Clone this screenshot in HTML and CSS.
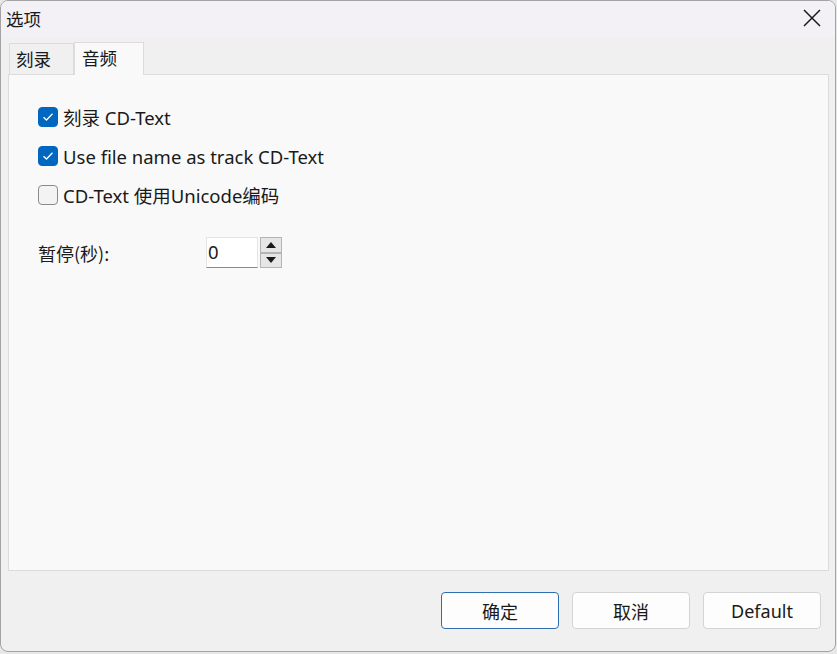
FILE: index.html
```html
<!DOCTYPE html>
<html lang="zh">
<head>
<meta charset="utf-8">
<title>选项</title>
<link rel="stylesheet" href="styles.css">
</head>
<body>
<div class="window">
  <div class="titlebar">
    <span class="title">选项</span>
    <span class="close">
      <svg width="18" height="18" viewBox="0 0 18 18"><path d="M1 1 L17 17 M17 1 L1 17" stroke="#1a1a1a" stroke-width="1.5" fill="none"/></svg>
    </span>
  </div>
  <div class="main">
    <div class="tabs">
      <div class="tab">刻录</div>
      <div class="tab active">音频</div>
    </div>
    <div class="panel">
      <label class="check-row">
        <span class="box checked"><svg width="12" height="10" viewBox="0 0 12 10"><path d="M1.5 5.2 L4.5 8 L10.5 1.8" stroke="#fff" stroke-width="1.3" fill="none"/></svg></span>
        <span class="lbl">刻录 CD-Text</span>
      </label>
      <label class="check-row">
        <span class="box checked"><svg width="12" height="10" viewBox="0 0 12 10"><path d="M1.5 5.2 L4.5 8 L10.5 1.8" stroke="#fff" stroke-width="1.3" fill="none"/></svg></span>
        <span class="lbl">Use file name as track CD-Text</span>
      </label>
      <label class="check-row">
        <span class="box"></span>
        <span class="lbl">CD-Text 使用Unicode编码</span>
      </label>
      <div class="pause-row">
        <span class="pause-lbl">暂停(秒):</span>
        <div class="spin">
          <div class="spin-input">0</div>
          <div class="spin-btns">
            <div class="spin-btn"><svg width="10" height="6" viewBox="0 0 10 6"><path d="M0 6 L5 0 L10 6 Z" fill="#1a1a1a"/></svg></div>
            <div class="spin-btn"><svg width="10" height="6" viewBox="0 0 10 6"><path d="M0 0 L5 6 L10 0 Z" fill="#1a1a1a"/></svg></div>
          </div>
        </div>
      </div>
    </div>
  </div>
  <div class="footer">
    <button class="btn primary">确定</button>
    <button class="btn">取消</button>
    <button class="btn">Default</button>
  </div>
</div>
</body>
</html>
```
FILE: styles.css
```css
html, body {
  margin: 0;
  padding: 0;
  background: #e8e8e8;
}
body {
  width: 837px;
  height: 654px;
  font-family: "Segoe UI", "Noto Sans", "Noto Sans CJK SC", sans-serif;
  color: #1a1a1a;
}
.window {
  box-sizing: border-box;
  width: 836px;
  height: 652px;
  border: 1px solid #a3a3a3;
  border-radius: 8px;
  background: #f0f0f0;
  display: flex;
  flex-direction: column;
  overflow: hidden;
}
.titlebar {
  height: 36px;
  background: #f3f1f6;
  display: flex;
  align-items: center;
  justify-content: space-between;
  padding: 0 14px 0 5px;
  flex: none;
}
.title {
  font-size: 17.5px;
  font-family: "Noto Sans CJK SC", sans-serif;
  margin-top: -2px;
}
.close {
  display: flex;
  margin-top: -2px;
}
.main {
  padding: 5px 6px 0 7px;
  display: flex;
  flex-direction: column;
  flex: 1;
}
.tabs {
  display: flex;
  align-items: flex-end;
  height: 32px;
  padding-left: 1px;
}
.tab {
  box-sizing: border-box;
  height: 31px;
  width: 65px;
  border: 1px solid #dcdcdc;
  border-bottom: none;
  background: #f0f0f0;
  font-family: "Noto Sans CJK SC", sans-serif;
  font-size: 17.5px;
  padding-left: 6px;
  line-height: 29px;
}
.tab.active {
  height: 33px;
  width: 70px;
  background: #f9f9f9;
  margin-bottom: -1px;
  position: relative;
  z-index: 1;
  padding-left: 7px;
}
.panel {
  box-sizing: border-box;
  height: 497px;
  border: 1px solid #dcdcdc;
  background: #f9f9f9;
  padding: 32px 0 0 29px;
}
.check-row {
  display: flex;
  align-items: center;
  height: 20px;
  margin-bottom: 19px;
}
.box {
  box-sizing: border-box;
  width: 20px;
  height: 20px;
  border-radius: 4px;
  border: 1px solid #8b8b8b;
  background: #f3f3f3;
  display: flex;
  align-items: center;
  justify-content: center;
  flex: none;
}
.box.checked {
  background: #0067c0;
  border-color: #0067c0;
}
.lbl {
  margin-left: 5px;
  font-size: 18.5px;
  font-family: "Segoe UI", "Noto Sans", "Noto Sans CJK SC", sans-serif;
  white-space: nowrap;
}
.pause-row {
  display: flex;
  align-items: center;
  margin-top: 32px;
}
.pause-lbl {
  width: 168px;
  font-size: 18px;
  font-family: "Noto Sans CJK SC", sans-serif;
}
.spin {
  display: flex;
  gap: 2px;
}
.spin-input {
  box-sizing: border-box;
  width: 52px;
  height: 31px;
  background: #fff;
  border: 1px solid #e5e5e5;
  border-bottom: 1px solid #8a8a8a;
  font-size: 18.5px;
  line-height: 28px;
  padding-left: 1px;
}
.spin-btns {
  display: flex;
  flex-direction: column;
}
.spin-btn {
  box-sizing: border-box;
  width: 22px;
  height: 15.5px;
  background: #e6e6e6;
  border: 1px solid #b4b4b4;
  display: flex;
  align-items: center;
  justify-content: center;
}
.footer {
  flex: none;
  height: 81px;
  display: flex;
  justify-content: flex-end;
  align-items: flex-start;
  gap: 13px;
  padding: 21px 14px 0 0;
  box-sizing: border-box;
}
.btn {
  box-sizing: border-box;
  width: 118px;
  height: 37px;
  border: 1px solid #d4d4d4;
  border-radius: 4px;
  background: #fdfdfd;
  font-family: "Segoe UI", "Noto Sans", "Noto Sans CJK SC", sans-serif;
  font-size: 18px;
  color: #1a1a1a;
  padding: 0;
}
.btn.primary {
  border-color: #2d6fb0;
}
```
